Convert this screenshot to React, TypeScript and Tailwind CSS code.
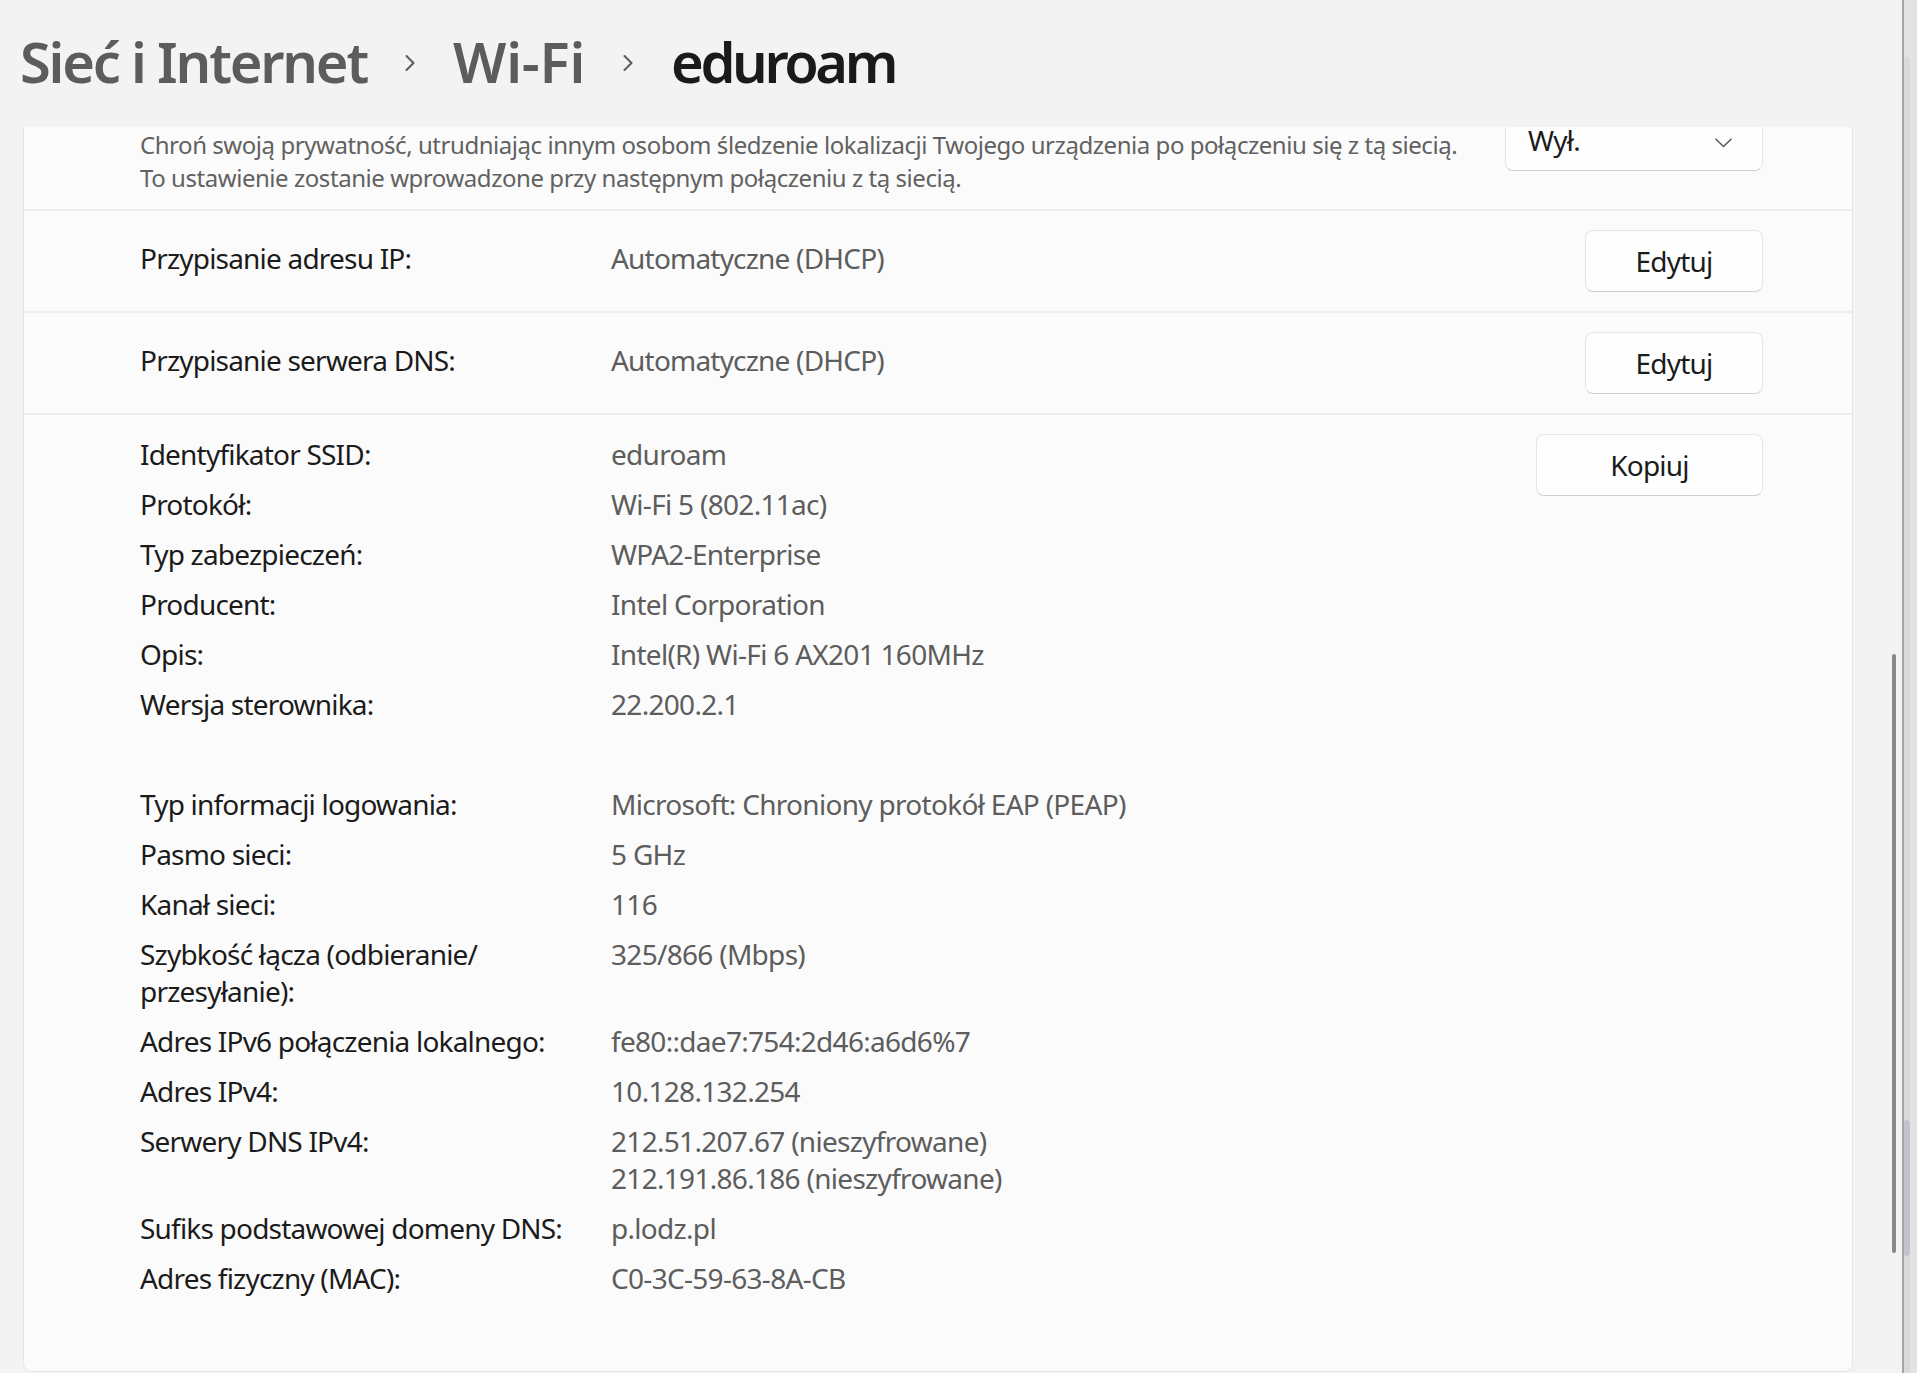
import { ChevronRight } from 'lucide-react';

const font = { fontFamily: '"Noto Sans", "Open Sans", sans-serif' };

type Detail = { label: string[]; value: string[] } | null;

const details: Detail[] = [
  { label: ['Identyfikator SSID:'], value: ['eduroam'] },
  { label: ['Protokół:'], value: ['Wi-Fi 5 (802.11ac)'] },
  { label: ['Typ zabezpieczeń:'], value: ['WPA2-Enterprise'] },
  { label: ['Producent:'], value: ['Intel Corporation'] },
  { label: ['Opis:'], value: ['Intel(R) Wi-Fi 6 AX201 160MHz'] },
  { label: ['Wersja sterownika:'], value: ['22.200.2.1'] },
  null,
  { label: ['Typ informacji logowania:'], value: ['Microsoft: Chroniony protokół EAP (PEAP)'] },
  { label: ['Pasmo sieci:'], value: ['5 GHz'] },
  { label: ['Kanał sieci:'], value: ['116'] },
  { label: ['Szybkość łącza (odbieranie/', 'przesyłanie):'], value: ['325/866 (Mbps)'] },
  { label: ['Adres IPv6 połączenia lokalnego:'], value: ['fe80::dae7:754:2d46:a6d6%7'] },
  { label: ['Adres IPv4:'], value: ['10.128.132.254'] },
  { label: ['Serwery DNS IPv4:'], value: ['212.51.207.67 (nieszyfrowane)', '212.191.86.186 (nieszyfrowane)'] },
  { label: ['Sufiks podstawowej domeny DNS:'], value: ['p.lodz.pl'] },
  { label: ['Adres fizyczny (MAC):'], value: ['C0-3C-59-63-8A-CB'] },
];

function Button({ children, width }: { children: string; width: string }) {
  return (
    <button
      className={`${width} h-[62px] shrink-0 rounded-[8px] border border-[#e5e5e5] border-b-[#cfcfcf] bg-[#fefefe] text-[28px] tracking-[-0.8px] text-[#1b1b1b]`}
    >
      {children}
    </button>
  );
}

function SettingRow({ label, value }: { label: string; value: string }) {
  return (
    <div className="flex h-[102px] items-center border-t-2 border-[#ededed] pl-[116px] pr-[89px] text-[28px] tracking-[-0.8px]">
      <div className="flex pb-[7px]">
        <div className="w-[471px] text-[#1b1b1b]">{label}</div>
        <div className="text-[#5d5d5d]">{value}</div>
      </div>
      <div className="ml-auto">
        <Button width="w-[178px]">Edytuj</Button>
      </div>
    </div>
  );
}

export default function App() {
  return (
    <div className="flex h-[1373px] w-full overflow-hidden bg-[#f3f3f3]" style={font}>
      <div className="flex min-w-0 flex-1 flex-col">
        {/* breadcrumb title */}
        <header className="flex h-[127px] shrink-0 items-start pl-[20px] pt-[23px] text-[56px] font-semibold leading-[76px]">
          <span className="tracking-[-2.2px] text-[#5c5c5c]">Sieć i Internet</span>
          <ChevronRight className="mx-[29px] mt-[26px] h-[28px] w-[28px] text-[#5c5c5c]" strokeWidth={1.8} />
          <span className="tracking-[-0.2px] text-[#5c5c5c]">Wi-Fi</span>
          <ChevronRight className="mx-[29px] mt-[26px] h-[28px] w-[28px] text-[#5c5c5c]" strokeWidth={1.8} />
          <span className="tracking-[-3.4px] text-[#1a1a1a]">eduroam</span>
        </header>

        <div className="flex min-h-0 flex-1 overflow-hidden pb-[1px] pl-[23px]">
          <section className="flex w-[1830px] shrink-0 flex-col rounded-b-[8px] border-x border-b border-[#e5e5e5] bg-[#fbfbfb]">
            {/* random hardware addresses row, scrolled partly out of view */}
            <div className="flex items-start pb-[15px] pl-[116px] pr-[89px] pt-[1px]">
              <p className="text-[24px] leading-[33px] tracking-[-0.45px] text-[#616161]">
                Chroń swoją prywatność, utrudniając innym osobom śledzenie lokalizacji Twojego urządzenia po połączeniu się z tą siecią.
                <br />
                To ustawienie zostanie wprowadzone przy następnym połączeniu z tą siecią.
              </p>
              <div className="-mt-[19px] ml-auto flex h-[62px] w-[258px] shrink-0 items-center justify-between rounded-[8px] border border-[#e5e5e5] border-b-[#cfcfcf] bg-[#fefefe] pl-[22px] pr-[30px] text-[28px] tracking-[-0.8px] text-[#1b1b1b]">
                <span>Wył.</span>
                <svg className="mt-[6px] h-[10px] w-[17px] text-[#5c5c5c]" viewBox="0 0 17 10" fill="none">
                  <path d="M1 1.2 8.5 8.5 16 1.2" stroke="currentColor" strokeWidth="1.6" strokeLinecap="round" strokeLinejoin="round" />
                </svg>
              </div>
            </div>

            <SettingRow label="Przypisanie adresu IP:" value="Automatyczne (DHCP)" />
            <SettingRow label="Przypisanie serwera DNS:" value="Automatyczne (DHCP)" />

            <div className="flex flex-1 items-start border-t-2 border-[#ededed] pl-[116px] pr-[89px] pt-[19px] text-[28px] tracking-[-0.8px]">
              <div className="mt-[2px] grid grid-cols-[471px_1fr] gap-y-[13px] leading-[37px]">
                {details.map((d, i) =>
                  d ? (
                    <div key={i} className="contents">
                      <div className="text-[#1b1b1b]">
                        {d.label.map((l) => (
                          <div key={l}>{l}</div>
                        ))}
                      </div>
                      <div className="text-[#5d5d5d]">
                        {d.value.map((v) => (
                          <div key={v} className="tracking-[-0.7px]">{v}</div>
                        ))}
                      </div>
                    </div>
                  ) : (
                    <div key={i} className="col-span-2 h-[37px]" />
                  ),
                )}
              </div>
              <div className="ml-auto">
                <Button width="w-[227px]">Kopiuj</Button>
              </div>
            </div>
          </section>

          {/* overlay scrollbar */}
          <div className="w-[49px] shrink-0 pl-[39px] pt-[527px]">
            <div className="h-[599px] w-[4px] rounded-full bg-[#8a8a8a]" />
          </div>
        </div>
      </div>

      {/* edge of the window behind */}
      <div className="flex w-[15px] shrink-0 border-l-2 border-[#a6a6a6] bg-[#e3e3e3]">
        <div className="mt-[57px] flex w-[6px] flex-col rounded-t-[6px] bg-[#dadada]">
          <div className="mt-[1063px] h-[136px] rounded-[4px] bg-[#c2c2c8]" />
        </div>
      </div>
    </div>
  );
}
